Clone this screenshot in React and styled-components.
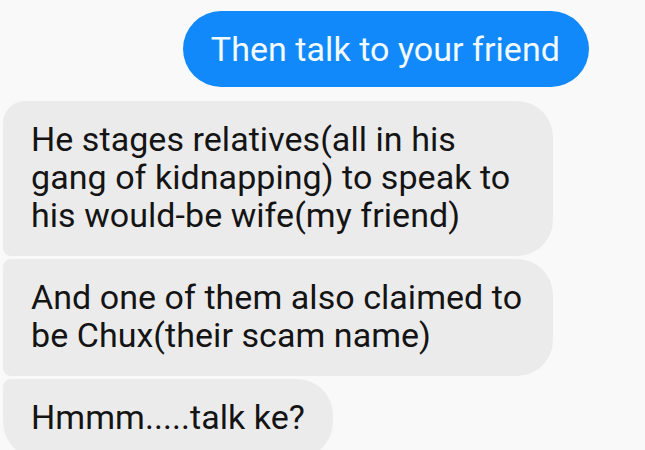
import React from "react";
import styled, { createGlobalStyle, css } from "styled-components";

const Global = createGlobalStyle`
  html, body {
    margin: 0;
    padding: 0;
    background: #f9f9f9;
    overflow: hidden;
  }
  body {
    font-family: Roboto, "Noto Sans", "Liberation Sans", sans-serif;
  }
`;

const Thread = styled.div`
  width: 645px;
  height: 450px;
  overflow: hidden;
  display: flex;
  flex-direction: column;
  padding: 11px 0 0 3px;
  box-sizing: border-box;
`;

const SentRow = styled.div`
  display: flex;
  justify-content: flex-end;
  padding-right: 56px;
  margin-bottom: 14px;
`;

const Bubble = styled.div`
  font-size: 34px;
  line-height: 38px;
  padding: 19px 28px 22px;
  box-sizing: border-box;
  max-width: 550px;
  width: fit-content;
  letter-spacing: 0.05px;
`;

const SentBubble = styled(Bubble)`
  background: #1289fb;
  color: #f2fbff;
  padding: 19px 29px 19px 28px;
  border-radius: 38px;
`;

const ReceivedGroup = styled.div`
  display: flex;
  flex-direction: column;
  align-items: flex-start;
  gap: 3px;
`;

const ReceivedBubble = styled(Bubble)`
  background: #ebebeb;
  color: #141414;
  border-radius: 8px 36px 36px 8px;
  ${(p) =>
    p.$first &&
    css`
      border-top-left-radius: 22px;
    `}
  ${(p) =>
    p.$last &&
    css`
      border-bottom-left-radius: 36px;
    `}
`;

export default function App() {
  return (
    <>
      <Global />
      <Thread>
        <SentRow>
          <SentBubble>Then talk to your friend</SentBubble>
        </SentRow>
        <ReceivedGroup>
          <ReceivedBubble $first>
            He stages relatives(all in his gang of kidnapping) to speak to his
            would-be wife(my friend)
          </ReceivedBubble>
          <ReceivedBubble>
            And one of them also claimed to be Chux(their scam name)
          </ReceivedBubble>
          <ReceivedBubble $last>Hmmm.....talk ke?</ReceivedBubble>
        </ReceivedGroup>
      </Thread>
    </>
  );
}
